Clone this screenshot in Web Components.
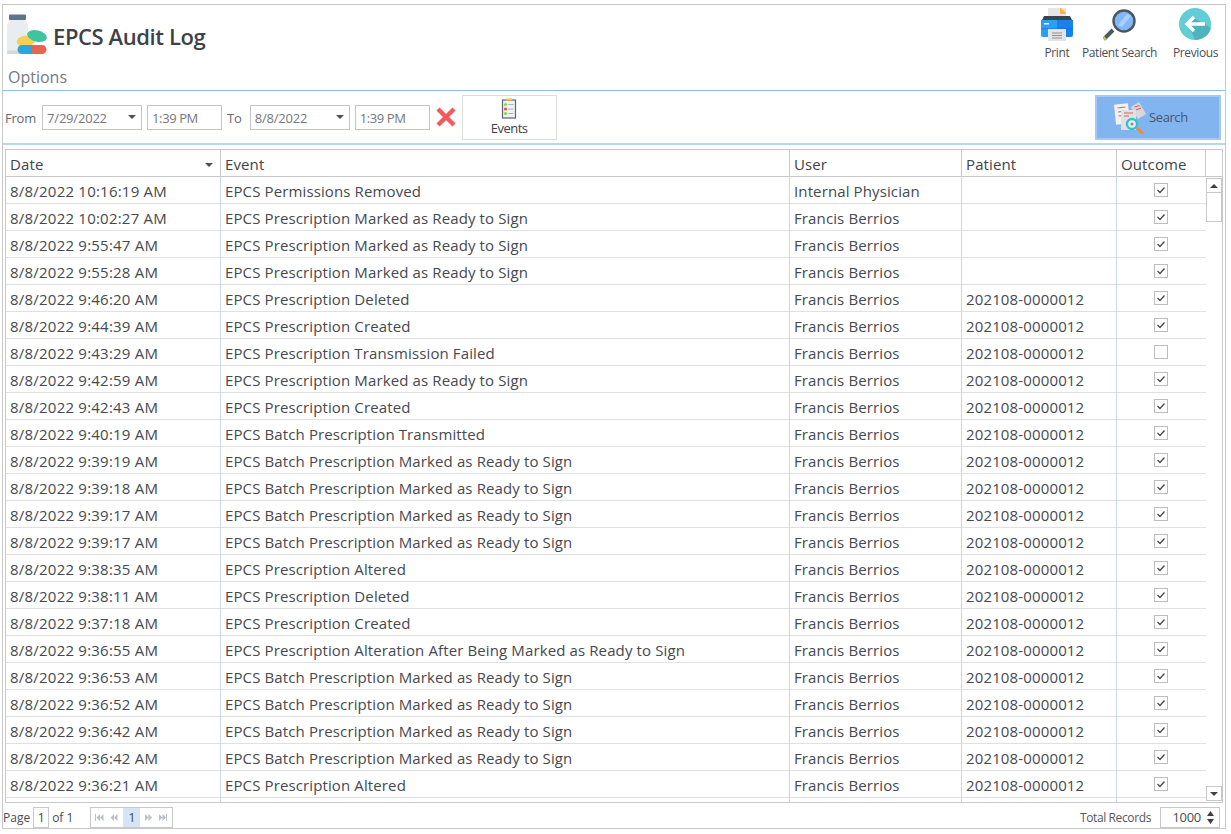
<!doctype html>
<html>
<head>
<meta charset="utf-8">
<title>EPCS Audit Log</title>
<style>
  html, body { margin: 0; height: 100%; overflow: hidden; background: #fff; }
  body { font-family: "Open Sans", "Noto Sans", sans-serif; color: #444; }
</style>
</head>
<body>
<audit-window>
  <audit-header slot="header" title-text="EPCS Audit Log">
    <header-action label="Print" slot="actions" style="margin-right:8px">
      <svg width="34" height="33" viewBox="0 0 34 33">
        <rect x="8" y="0" width="18" height="14" fill="#e6e6e6"/>
        <path d="M20 0l6 6h-6z" fill="#f6a33c"/>
        <path d="M20 0h1l5 5v1h-6z" fill="#f9b44e"/>
        <path d="M4 8h26l2 4H2z" fill="#37474f"/>
        <path d="M1 12h16v17H3a2 2 0 0 1-2-2z" fill="#2aa0f4"/>
        <path d="M17 12h16v15a2 2 0 0 1-2 2H17z" fill="#1b7ff0"/>
        <rect x="4" y="15" width="5" height="1.5" fill="#e6f4ff"/>
        <rect x="1" y="20" width="32" height="1.5" fill="#1565c0" opacity=".45"/>
        <rect x="8" y="21" width="18" height="12" fill="#e4e4e4"/>
        <path d="M12 25h10M12 27.500h10M12 30h10" stroke="#8a9299" stroke-width="1"/>
      </svg>
    </header-action>
    <header-action label="Patient Search" slot="actions" style="margin-right:16px">
      <svg style="margin-left:4px" width="36" height="33" viewBox="0 0 36 33">
        <path d="M10 22L1 31" stroke="#4c5a5f" stroke-width="4"/>
        <path d="M2.500 29.500L.6 31.400" stroke="#b5c84a" stroke-width="3.500"/>
        <circle cx="21" cy="13" r="10.500" fill="#82b8f8" stroke="#4a555c" stroke-width="2.400"/>
        <path d="M15 17l9-11 4 2-9 11z" fill="#a8d0fb"/>
      </svg>
    </header-action>
    <header-action label="Previous" slot="actions">
      <svg width="34" height="33" viewBox="0 0 34 33">
        <circle cx="16" cy="16" r="16" fill="#62cdd7"/>
        <path d="M9 16l6 -6 17 10a16 16 0 0 1-16 12z" fill="#4fb3be"/>
        <path d="M15 9l-7 7 7 7M8.500 16H26" fill="none" stroke="#fff" stroke-width="3.400"/>
      </svg>
    </header-action>
  </audit-header>

  <audit-toolbar slot="toolbar">
    <tool-label>From</tool-label>
    <date-field value="7/29/2022" style="margin-left:6px"></date-field>
    <time-field value="1:39 PM" style="margin-left:5px"></time-field>
    <tool-label style="margin-left:5px">To</tool-label>
    <date-field value="8/8/2022" style="margin-left:8px"></date-field>
    <time-field value="1:39 PM" style="margin-left:5px;width:75px"></time-field>
    <svg style="margin-left:5px;flex:none" width="22" height="22" viewBox="0 0 22 22">
      <path d="M3 3l16 16M19 3L3 19" stroke="#f6585e" stroke-width="4.400"/>
    </svg>
    <tool-button style="margin-left:5px">
      <svg width="16" height="21" viewBox="0 0 16 21">
        <rect x="1.500" y="2" width="13" height="18" fill="#f0f1f2" stroke="#5a6570" stroke-width="1.200"/>
        <rect x="5" y="0.500" width="6" height="2" fill="#f7c23f"/>
        <circle cx="4.500" cy="6.500" r="1.600" fill="#8fd14f"/>
        <circle cx="4.500" cy="11" r="1.600" fill="#ee4a5e"/>
        <circle cx="4.500" cy="15.500" r="1.600" fill="#8fd14f"/>
        <path d="M7.500 6.500h5M7.500 11h5M7.500 15.500h5" stroke="#a8afb5" stroke-width="1.200"/>
      </svg>
      Events
    </tool-button>
    <search-button style="margin-left:auto">Search</search-button>
  </audit-toolbar>

  <audit-grid slot="grid"></audit-grid>
  <audit-footer slot="footer"></audit-footer>
</audit-window>

<script>
/* global HTMLElement */

const ROWS = [
  ['8/8/2022 10:16:19 AM', 'EPCS Permissions Removed', 'Internal Physician', '', 1],
  ['8/8/2022 10:02:27 AM', 'EPCS Prescription Marked as Ready to Sign', 'Francis Berrios', '', 1],
  ['8/8/2022 9:55:47 AM', 'EPCS Prescription Marked as Ready to Sign', 'Francis Berrios', '', 1],
  ['8/8/2022 9:55:28 AM', 'EPCS Prescription Marked as Ready to Sign', 'Francis Berrios', '', 1],
  ['8/8/2022 9:46:20 AM', 'EPCS Prescription Deleted', 'Francis Berrios', '202108-0000012', 1],
  ['8/8/2022 9:44:39 AM', 'EPCS Prescription Created', 'Francis Berrios', '202108-0000012', 1],
  ['8/8/2022 9:43:29 AM', 'EPCS Prescription Transmission Failed', 'Francis Berrios', '202108-0000012', 0],
  ['8/8/2022 9:42:59 AM', 'EPCS Prescription Marked as Ready to Sign', 'Francis Berrios', '202108-0000012', 1],
  ['8/8/2022 9:42:43 AM', 'EPCS Prescription Created', 'Francis Berrios', '202108-0000012', 1],
  ['8/8/2022 9:40:19 AM', 'EPCS Batch Prescription Transmitted', 'Francis Berrios', '202108-0000012', 1],
  ['8/8/2022 9:39:19 AM', 'EPCS Batch Prescription Marked as Ready to Sign', 'Francis Berrios', '202108-0000012', 1],
  ['8/8/2022 9:39:18 AM', 'EPCS Batch Prescription Marked as Ready to Sign', 'Francis Berrios', '202108-0000012', 1],
  ['8/8/2022 9:39:17 AM', 'EPCS Batch Prescription Marked as Ready to Sign', 'Francis Berrios', '202108-0000012', 1],
  ['8/8/2022 9:39:17 AM', 'EPCS Batch Prescription Marked as Ready to Sign', 'Francis Berrios', '202108-0000012', 1],
  ['8/8/2022 9:38:35 AM', 'EPCS Prescription Altered', 'Francis Berrios', '202108-0000012', 1],
  ['8/8/2022 9:38:11 AM', 'EPCS Prescription Deleted', 'Francis Berrios', '202108-0000012', 1],
  ['8/8/2022 9:37:18 AM', 'EPCS Prescription Created', 'Francis Berrios', '202108-0000012', 1],
  ['8/8/2022 9:36:55 AM', 'EPCS Prescription Alteration After Being Marked as Ready to Sign', 'Francis Berrios', '202108-0000012', 1],
  ['8/8/2022 9:36:53 AM', 'EPCS Batch Prescription Marked as Ready to Sign', 'Francis Berrios', '202108-0000012', 1],
  ['8/8/2022 9:36:52 AM', 'EPCS Batch Prescription Marked as Ready to Sign', 'Francis Berrios', '202108-0000012', 1],
  ['8/8/2022 9:36:42 AM', 'EPCS Batch Prescription Marked as Ready to Sign', 'Francis Berrios', '202108-0000012', 1],
  ['8/8/2022 9:36:42 AM', 'EPCS Batch Prescription Marked as Ready to Sign', 'Francis Berrios', '202108-0000012', 1],
  ['8/8/2022 9:36:21 AM', 'EPCS Prescription Altered', 'Francis Berrios', '202108-0000012', 1],
  ['', '', '', '', -1]
]

const COLS = '215px 569px 172px 155px 89px'

function define (name, html, setup) {
  class El extends HTMLElement {
    constructor () {
      super()
      this.attachShadow({ mode: 'open' })
      const get = key => this.getAttribute(key) || ''
      this.shadowRoot.innerHTML = typeof html === 'function' ? html(get) : html
    }

    connectedCallback () {
      if (setup) setup(this.shadowRoot, this)
    }
  }
  window.customElements.define(name, El)
}

define('audit-window', `
  <style>
    :host {
      display: flex; flex-direction: column; box-sizing: border-box;
      width: 1224px; height: 825px; margin: 4px 0 0 2px;
      border: 1px solid #c8c8c8;
    }
  </style>
  <slot name="header"></slot>
  <slot name="toolbar"></slot>
  <slot name="grid"></slot>
  <slot name="footer"></slot>
`)

define('audit-header', get => `
  <style>
    :host {
      display: flex; justify-content: space-between; box-sizing: border-box;
      height: 86px; border-bottom: 1px solid #8fbdf0;
    }
    .left { display: flex; flex-direction: column; padding: 8px 0 0 4px; }
    .brand { display: flex; align-items: center; gap: 6px; height: 42px; }
    h1 { margin: 0; font-size: 22px; line-height: 30px; font-weight: 600; color: #3e4247; letter-spacing: -.4px; position: relative; top: 2px; }
    .options { margin: 11px 0 0 1px; font-size: 16px; line-height: 22px; color: #767b80; }
    .actions { display: flex; padding: 3px 7px 0 0; }
  </style>
  <div class="left">
    <div class="brand">
      <svg width="40" height="42" viewBox="0 0 40 42">
        <rect x="2" y="1.500" width="17" height="5.500" rx="1" fill="#5f7488"/>
        <path d="M3 7h15l3 5v28H0V12z" fill="#e9edf0"/>
        <rect x="0" y="37.500" width="21" height="3.500" fill="#d6d8da"/>
        <ellipse cx="19" cy="28" rx="9.500" ry="5.500" transform="rotate(-8 19 28)" fill="#f8cf56"/>
        <ellipse cx="30" cy="23" rx="10" ry="5.600" transform="rotate(14 30 23)" fill="#3fc49f"/>
        <path d="M15 32h10v9H15a4.500 4.500 0 0 1 0-9z" fill="#29a5e0"/>
        <path d="M25 32h10a4.500 4.500 0 0 1 0 9H25z" fill="#ea6352"/>
      </svg>
      <h1>${get('title-text')}</h1>
    </div>
    <div class="options">Options</div>
  </div>
  <div class="actions"><slot name="actions"></slot></div>
`)

define('header-action', get => `
  <style>
    :host { display: flex; flex-direction: column; align-items: center; height: max-content; }
    span { margin-top: 4px; font-size: 12px; line-height: 16px; color: #4a4f55; letter-spacing: -.4px; white-space: nowrap; }
    ::slotted(svg) { display: block; }
  </style>
  <slot></slot>
  <span>${get('label')}</span>
`)

define('audit-toolbar', `
  <style>
    :host {
      display: flex; align-items: center; box-sizing: border-box;
      height: 54px; padding: 0 4px 0 2px;
      border-bottom: 2px solid #b8d6f5;
    }
  </style>
  <slot></slot>
`)

define('tool-label', `
  <style>
    :host { display: block; font-size: 13px; color: #66696d; letter-spacing: -.2px; padding-top: 1px; }
  </style>
  <slot></slot>
`)

define('date-field', get => `
  <style>
    :host {
      display: flex; align-items: center; justify-content: space-between; box-sizing: border-box;
      width: 100px; height: 25px; padding: 1px 4px 0 4px;
      border: 1px solid #c4c4c4; font-size: 13px; color: #75787c; letter-spacing: -.2px;
    }
    i { width: 0; height: 0; margin: -1px 1px 0 0; border: 4px solid transparent; border-top-color: #505050; border-bottom: 0; }
  </style>
  <span>${get('value')}</span><i></i>
`)

define('time-field', get => `
  <style>
    :host {
      display: flex; align-items: center; box-sizing: border-box;
      width: 75px; height: 25px; padding: 1px 4px 0;
      border: 1px solid #c4c4c4; font-size: 13px; color: #75787c; letter-spacing: -.4px;
    }
  </style>
  ${get('value')}
`)

define('tool-button', `
  <style>
    :host {
      display: flex; flex-direction: column; align-items: center; box-sizing: border-box; flex: none;
      width: 95px; height: 45px; padding-top: 2px;
      border: 1px solid #dcdcdc; font-size: 13px; line-height: 16px; color: #3f4246; letter-spacing: -.5px;
    }
    ::slotted(svg) { display: block; margin-bottom: 1px; }
  </style>
  <slot></slot>
`)

define('search-button', `
  <style>
    :host {
      display: flex; align-items: center; box-sizing: border-box; flex: none;
      width: 126px; height: 45px; padding-left: 17px; gap: 3px;
      background: #82b4f0; border: 2px solid #a3c9f6;
      font-size: 13px; color: #46566c; letter-spacing: -.4px;
    }
  </style>
  <svg width="32" height="34" viewBox="0 0 32 34">
    <path d="M17 7l8-5 7 12-8 5z" fill="#d6d8da"/>
    <path d="M20.500 7l5 -1.500M22 10l5-2" stroke="#ee5a62" stroke-width="1.200"/>
    <rect x="1" y="4" width="14" height="20" fill="#f1f1f1" transform="rotate(-6 8 14)"/>
    <path d="M3.500 8l8-1M4 12l4-.5M4.500 16l4-.5" stroke="#ee5a62" stroke-width="1.200"/>
    <rect x="7" y="10" width="15" height="20" fill="#dfe2e4"/>
    <path d="M10 13h9M10 16h5" stroke="#ee5a62" stroke-width="1.200"/>
    <circle cx="18" cy="24" r="5" fill="#e9f3f5" stroke="#35c2c9" stroke-width="2.400"/>
    <circle cx="18" cy="24" r="1.500" fill="#7d8a90"/>
    <path d="M23 28l6 5.500" stroke="#f28a30" stroke-width="3"/>
  </svg>
  <slot></slot>
`)

define('audit-grid', `
  <style>
    :host {
      display: flex; flex-direction: column; box-sizing: border-box; flex: none;
      width: 1218px; height: 654px; margin: 4px 0 0 2px;
      border: 1px solid #c8c8c8; overflow: hidden; position: relative;
    }
    .head { display: grid; grid-template-columns: ${COLS} 1fr; grid-template-rows: 26px; height: 27px; box-sizing: border-box; border-bottom: 1px solid #c8c8c8; flex: none; }
    .head div { position: relative; box-sizing: border-box; padding: 0 4px; border-right: 1px solid #c8c8c8; font-size: 15px; line-height: 28px; color: #3f444a; letter-spacing: .12px; }
    .head div:last-child { border-right: 0; }
    .head i { position: absolute; right: 7px; top: 13px; border: 4px solid transparent; border-top-color: #505050; border-bottom: 0; }
    .body { flex: 1; min-height: 0; display: flex; overflow: hidden; }
    .rows { flex: none; width: 1200px; overflow: hidden; }
    .bar { flex: 1; display: flex; flex-direction: column; align-items: flex-end; padding: 1px 0 1px 0; }
    .btn { box-sizing: border-box; width: 16px; height: 15px; border: 1px solid #c8c8c8; display: flex; align-items: center; justify-content: center; }
    .up { border-bottom: 4px solid #404040; border-left: 4px solid transparent; border-right: 4px solid transparent; }
    .dn { border-top: 4px solid #404040; border-left: 4px solid transparent; border-right: 4px solid transparent; }
    .thumb { box-sizing: border-box; width: 16px; height: 30px; margin-top: -1px; border: 1px solid #c8c8c8; }
    .gap { flex: 1; }
  </style>
  <div class="head">
    <div>Date<i></i></div><div>Event</div><div>User</div><div>Patient</div><div>Outcome</div><div></div>
  </div>
  <div class="body">
    <div class="rows"></div>
    <div class="bar">
      <div class="btn"><span class="up"></span></div>
      <div class="thumb"></div>
      <div class="gap"></div>
      <div class="btn"><span class="dn"></span></div>
    </div>
  </div>
`, root => {
  const rows = root.querySelector('.rows')
  ROWS.forEach(data => {
    const row = document.createElement('grid-row')
    ;['date', 'event', 'user', 'patient'].forEach((key, i) => row.setAttribute(key, data[i]))
    row.setAttribute('outcome', data[4])
    rows.appendChild(row)
  })
})

define('grid-row', get => `
  <style>
    :host {
      display: grid; grid-template-columns: ${COLS}; grid-template-rows: 26px; box-sizing: border-box;
      height: 27px; border-bottom: 1px solid #e0e0e0;
    }
    div {
      box-sizing: border-box; height: 27px; margin-bottom: -1px; padding: 0 4px; border-right: 1px solid #c9d8e8;
      font-size: 15px; line-height: 28px; color: #46494e; white-space: nowrap; letter-spacing: .12px;
    }
    .d { letter-spacing: .22px; }
    .p { letter-spacing: .14px; }
    .o { display: flex; align-items: center; justify-content: center; height: 26px; margin: 0; padding: 0 1px 0 0; border-right: 0; }
    .c { display: block; width: 14px; height: 14px; }
  </style>
  <div class="d">${get('date')}</div>
  <div>${get('event')}</div>
  <div>${get('user')}</div>
  <div class="p">${get('patient')}</div>
  <div class="o">${get('outcome') === '-1' ? '' : `<svg class="c" viewBox="0 0 14 14">
    <rect x=".5" y=".5" width="13" height="13" fill="#fff" stroke="#bdbdbd"/>
    ${get('outcome') === '1' ? '<path d="M3.500 7l2.500 2.500 4.500-5" fill="none" stroke="#4a4a4a" stroke-width="1.300"/>' : ''}
  </svg>`}</div>
`)

define('audit-footer', `
  <style>
    :host {
      display: flex; align-items: center; box-sizing: border-box; flex: 1;
      padding: 3px 5px 0 0; font-size: 12px; color: #4a4d52;
    }
    .box { box-sizing: border-box; height: 21px; border: 1px solid #c8c8c8; display: flex; align-items: center; }
    .page { width: 16px; justify-content: center; margin: 0 3px 0 3px; font-size: 13px; }
    .pager { margin-left: 17px; width: 83px; color: #bcc0c4; }
    .pager svg { flex: none; width: 16px; height: 19px; }
    .pager b { flex: none; width: 17px; height: 19px; background: #d5e5f6; font-weight: 400; font-size: 13px; line-height: 19px; text-align: center; color: #4a4d52; }
    .total { margin-left: auto; margin-right: 9px; color: #55585c; letter-spacing: -.38px; }
    .spin { width: 60px; justify-content: flex-end; font-size: 13px; color: #4a4d52; letter-spacing: -.3px; }
    .spin svg { margin: 0 4px 0 5px; }
  </style>
  <span>Page</span>
  <div class="box page">1</div>
  <span>of 1</span>
  <div class="box pager">
    <svg viewBox="0 0 16 19"><path d="M4 6v7h1V6zM9 6L5.500 9.500 9 13zM12.500 6L9 9.500l3.500 3.500z" fill="currentColor"/></svg>
    <svg viewBox="0 0 16 19"><path d="M7 6L3.500 9.500 7 13zM10.500 6L7 9.500l3.500 3.500z" fill="currentColor"/></svg>
    <b>1</b>
    <svg viewBox="0 0 16 19"><path d="M5 6l3.500 3.500L5 13zM8.500 6l3.500 3.500L8.500 13z" fill="currentColor"/></svg>
    <svg viewBox="0 0 16 19"><path d="M3 6l3.500 3.500L3 13zM6.500 6L10 9.500 6.500 13zM10 6h1v7h-1z" fill="currentColor"/></svg>
  </div>
  <span class="total">Total Records</span>
  <div class="box spin">1000
    <svg width="9" height="15" viewBox="0 0 9 15"><path d="M4.500 1L8 6H1zM4.500 14L1 9h7z" fill="#404040"/></svg>
  </div>
`)
</script>
</body>
</html>
